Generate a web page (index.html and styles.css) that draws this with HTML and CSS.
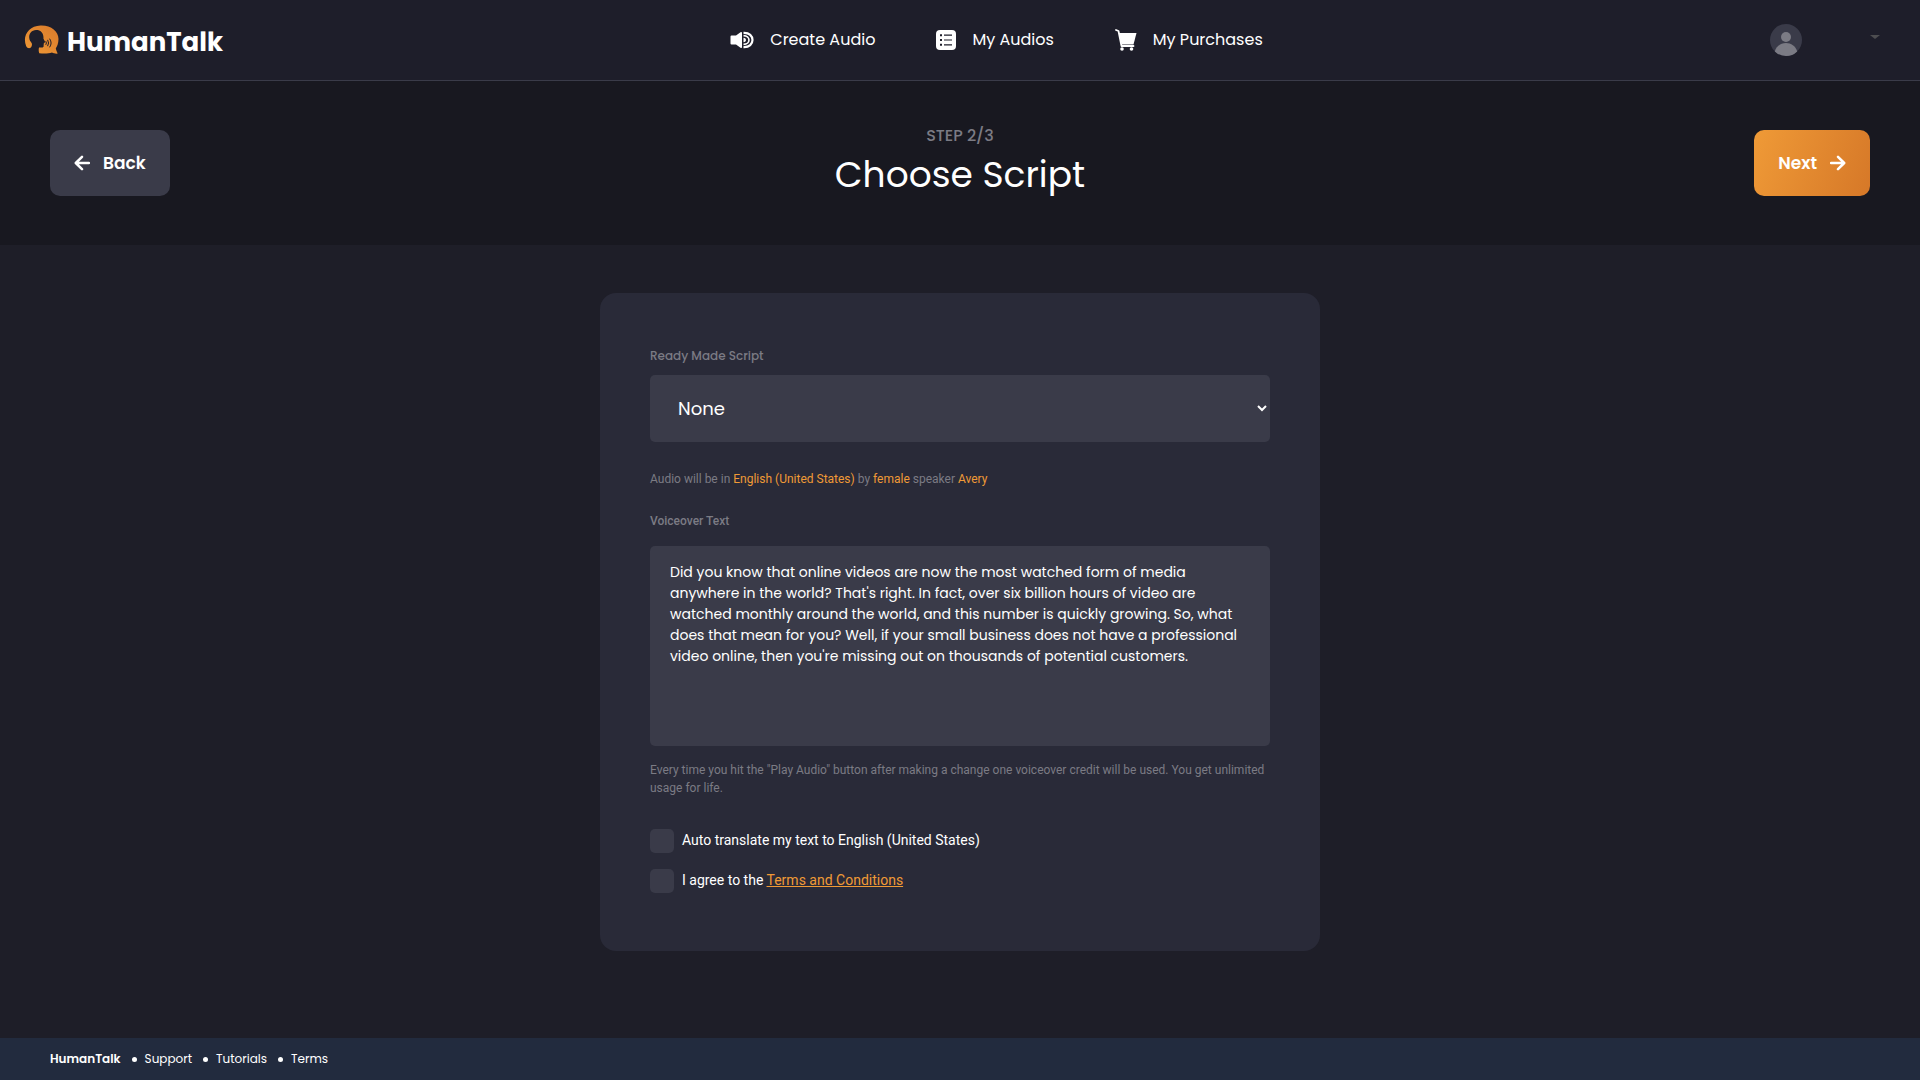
FILE: index.html
```html
<!DOCTYPE html>
<html lang="en">
<head>
    <meta charset="UTF-8">
    <meta name="viewport" content="width=device-width, initial-scale=1.0">
    <title>HumanTalk - Choose Script</title>
    <link rel="stylesheet" href="styles.css">
</head>
<body>
    <header class="header">
        <a class="logo" href="#">
            <svg width="35" height="30" viewBox="0 0 35 30" aria-hidden="true">
                <defs>
                    <linearGradient id="logoFill" x1="0" y1="1" x2="1" y2="0">
                        <stop offset="0" stop-color="#f09a36"/>
                        <stop offset="1" stop-color="#d97a2b"/>
                    </linearGradient>
                </defs>
                <path fill="url(#logoFill)" d="M7.5 21.5C6.500 24 3.200 23.500 2.200 21.200C-2 11 4.500 .8 16.500 .4C27 0 34.500 6 34.500 14C34.500 18.500 33 21.500 31.800 23.200C32.300 25.500 33 27.300 33.800 28.600C31.500 28.900 29.500 28.300 28 27.500C24.500 28.700 20 28.600 15.300 28.300C14.500 26.500 14.600 24.500 15 22.500H18C19.300 22.500 19.800 21.800 19.600 20.500L19.900 18L21.300 17.300L19.400 13.500C20 8 16.500 4.800 12 5C7.500 5.200 5 8.500 5.200 12.500C5.300 15 6.500 16.500 7.600 18C8.200 19 8 20.500 7.500 21.500Z"/>
                <path fill="none" stroke="#1e1e2a" stroke-width="1" stroke-linecap="round" d="M22 16.500Q23 18 22 19.500M23.800 15.200Q25.500 18 23.800 20.800M25.800 14Q28.600 18 25.800 22"/>
            </svg>
            <span>HumanTalk</span>
        </a>
        <nav class="nav">
            <a href="#">
                <svg width="24" height="24" viewBox="0 0 24 24" aria-hidden="true">
                    <path fill="#fff" d="M.5 8.500Q.5 7.500 1.500 7.500H6L10.500 4.300Q12 3.500 12 5V19Q12 20.500 10.500 19.700L6 16.500H1.500Q.5 16.500 .5 15.500Z"/>
                    <path fill="none" stroke="#fff" stroke-width="2.200" d="M13.500 4.800C25.500 4.200 25.500 19.800 13.500 19.200"/>
                    <path fill="none" stroke="#fff" stroke-width="1.600" d="M13.500 7.600C20.800 7.600 20.800 16.400 13.500 16.400"/>
                    <path fill="#fff" d="M13.500 9.800C16.800 9.800 16.800 14.200 13.500 14.200Z"/>
                </svg>
                <span>Create Audio</span>
            </a>
            <a href="#">
                <svg width="20" height="20" viewBox="0 0 20 20" aria-hidden="true">
                    <rect width="20" height="20" rx="4" fill="#fff"/>
                    <path stroke="#1e1e2a" stroke-width="1.200" d="M8 5.200H16M8 10H16M8 14.800H16"/>
                    <path fill="#1e1e2a" d="M4 4.200h2v2h-2zM4 9h2v2h-2zM4 13.800h2v2h-2z"/>
                </svg>
                <span>My Audios</span>
            </a>
            <a href="#">
                <svg width="22" height="22" viewBox="0 0 22 22" aria-hidden="true">
                    <path fill="none" stroke="#fff" stroke-width="1.800" stroke-linecap="round" stroke-linejoin="round" d="M1 1L3.500 2L6.500 17H18.500"/>
                    <path fill="#fff" d="M4 4H21.500L18.500 15.500H6.500Z"/>
                    <circle cx="7" cy="20" r="1.800" fill="#fff"/>
                    <circle cx="16.500" cy="20" r="1.800" fill="#fff"/>
                </svg>
                <span>My Purchases</span>
            </a>
        </nav>
        <button class="user" type="button" aria-label="Account">
            <svg width="32" height="32" viewBox="0 0 32 32" aria-hidden="true">
                <circle cx="16" cy="16" r="16" fill="#3a3b49"/>
                <circle cx="16" cy="13" r="5" fill="#7b7b84"/>
                <path fill="#7b7b84" d="M4.800 27.400C6.500 22 11 19 16 19S25.500 22 27.200 27.400A16 16 0 0 1 4.800 27.400Z"/>
            </svg>
            <span class="caret"></span>
        </button>
    </header>

    <section class="steps">
        <button class="btn btn-back" type="button">
            <svg width="16" height="16" viewBox="0 0 16 16" aria-hidden="true">
                <path d="M8 1.800L1.800 8L8 14.200M2 8H15"/>
            </svg>
            Back
        </button>
        <div class="steps-title">
            <p>STEP 2/3</p>
            <h1>Choose Script</h1>
        </div>
        <button class="btn btn-next" type="button">
            Next
            <svg width="16" height="16" viewBox="0 0 16 16" aria-hidden="true">
                <path d="M8 1.800L14.200 8L8 14.200M14 8H1"/>
            </svg>
        </button>
    </section>

    <main class="main">
        <form class="card">
            <label class="label" for="script">Ready Made Script</label>
            <select class="select" id="script">
                <option>None</option>
            </select>

            <p class="note">Audio will be in <b>English (United States)</b> by <b>female</b> speaker <b>Avery</b></p>

            <label class="label label-text" for="voiceover">Voiceover Text</label>
            <textarea class="textarea" id="voiceover" spellcheck="false">Did you know that online videos are now the most watched form of media anywhere in the world? That's right. In fact, over six billion hours of video are watched monthly around the world, and this number is quickly growing. So, what does that mean for you? Well, if your small business does not have a professional video online, then you're missing out on thousands of potential customers.</textarea>
            <p class="help">Every time you hit the "Play Audio" button after making a change one voiceover credit will be used. You get unlimited usage for life.</p>

            <div class="check">
                <input type="checkbox" id="translate">
                <label for="translate">Auto translate my text to English (United States)</label>
            </div>
            <div class="check">
                <input type="checkbox" id="agree">
                <label for="agree">I agree to the <a href="#">Terms and Conditions</a></label>
            </div>
        </form>
    </main>

    <footer class="footer">
        <strong>HumanTalk</strong>
        <a href="#">Support</a>
        <a href="#">Tutorials</a>
        <a href="#">Terms</a>
    </footer>
</body>
</html>
```
FILE: styles.css
```css
* {
    box-sizing: border-box;
}
body {
    margin: 0;
    min-height: 100vh;
    display: flex;
    flex-direction: column;
    background-color: #1e1e28;
    color: #fff;
    font-family: Poppins, Inter, sans-serif;
    font-size: 16px;
}
a {
    color: inherit;
    text-decoration: none;
}
p, h1 {
    margin: 0;
}
button, select, textarea {
    border: 0;
    color: inherit;
    font-family: inherit;
}

/* top bar */
.header {
    display: flex;
    justify-content: space-between;
    align-items: center;
    height: 81px;
    padding: 0 40px 0 24px;
    background-color: #1e1e2a;
    border-bottom: 1px solid #3a3b49;
}
.logo {
    display: flex;
    align-items: center;
    gap: 8px;
    font-size: 26px;
    font-weight: 700;
}
.logo span {
    padding-top: 4px;
}
.nav {
    display: flex;
    gap: 61px;
}
.nav a {
    display: flex;
    align-items: center;
    gap: 16px;
}
.nav span {
    padding-bottom: 2px;
}
.user {
    display: flex;
    align-items: center;
    gap: 68px;
    padding: 0;
    background: none;
    cursor: pointer;
}
.caret {
    margin-bottom: 6px;
    border: 5px solid transparent;
    border-top: 4px solid #4d4d50;
    border-bottom: 0;
}

/* step bar */
.steps {
    display: grid;
    grid-template-columns: 1fr auto 1fr;
    align-items: center;
    height: 164px;
    padding: 0 50px;
    background-color: #181820;
}
.steps-title {
    text-align: center;
}
.steps-title p {
    color: #7b7b84;
    font-weight: 500;
    line-height: 24px;
}
.steps-title h1 {
    font-size: 36px;
    font-weight: 400;
    line-height: 54px;
}
.btn {
    display: flex;
    align-items: center;
    gap: 13px;
    height: 66px;
    padding: 0 24px;
    border-radius: 10px;
    font-size: 17px;
    font-weight: 600;
    cursor: pointer;
}
.btn svg {
    fill: none;
    stroke: #fff;
    stroke-width: 2.5;
    stroke-linecap: round;
    stroke-linejoin: round;
}
.btn-back {
    justify-self: start;
    background-color: #3a3b49;
}
.btn-next {
    justify-self: end;
    background: linear-gradient(110deg, #ef9a37, #d67828);
}

/* form */
.main {
    flex: 1;
    padding: 48px 20px;
}
.card {
    max-width: 720px;
    margin: 0 auto;
    padding: 54px 50px 58px;
    border-radius: 16px;
    background-color: #292a38;
}
.label {
    display: block;
    margin-bottom: 10px;
    color: #7b7b84;
    font-size: 12px;
    font-weight: 500;
    line-height: 18px;
}
.label-text {
    margin-bottom: 16px;
    font-family: Roboto, sans-serif;
}
.select {
    display: block;
    width: 100%;
    height: 67px;
    padding: 0 1px 0 24px;
    border-radius: 5px;
    background-color: #3a3b49;
    font-size: 18px;
}
.note, .help {
    color: #7b7b84;
    font-family: Roboto, sans-serif;
    font-size: 12px;
    line-height: 18px;
}
.note {
    margin: 28px 0 24px;
}
.note b {
    color: #f09a36;
    font-weight: 400;
}
.textarea {
    display: block;
    width: 100%;
    height: 200px;
    margin-bottom: 15px;
    padding: 16px 20px;
    border-radius: 5px;
    background-color: #3a3b49;
    font-size: 14px;
    line-height: 21px;
    resize: none;
}
.help {
    margin-bottom: 32px;
}
.check {
    display: flex;
    align-items: flex-start;
    gap: 8px;
    font-family: Roboto, sans-serif;
    font-size: 14px;
    line-height: 22px;
}
.check + .check {
    margin-top: 16px;
}
.check input {
    appearance: none;
    width: 24px;
    height: 24px;
    margin: 0;
    border-radius: 5px;
    background-color: #3a3b49;
}
.check input:checked {
    background-color: #f09a36;
}
.check a {
    color: #f09a36;
    text-decoration: underline;
}

/* footer */
.footer {
    display: flex;
    align-items: center;
    gap: 11px;
    height: 42px;
    padding: 0 50px;
    background-color: #222b3e;
    font-size: 12px;
}
.footer strong {
    font-weight: 600;
}
.footer a {
    display: flex;
    align-items: center;
    gap: 8px;
}
.footer a::before {
    content: "";
    width: 5px;
    height: 5px;
    border-radius: 50%;
    background-color: #fff;
}
```
